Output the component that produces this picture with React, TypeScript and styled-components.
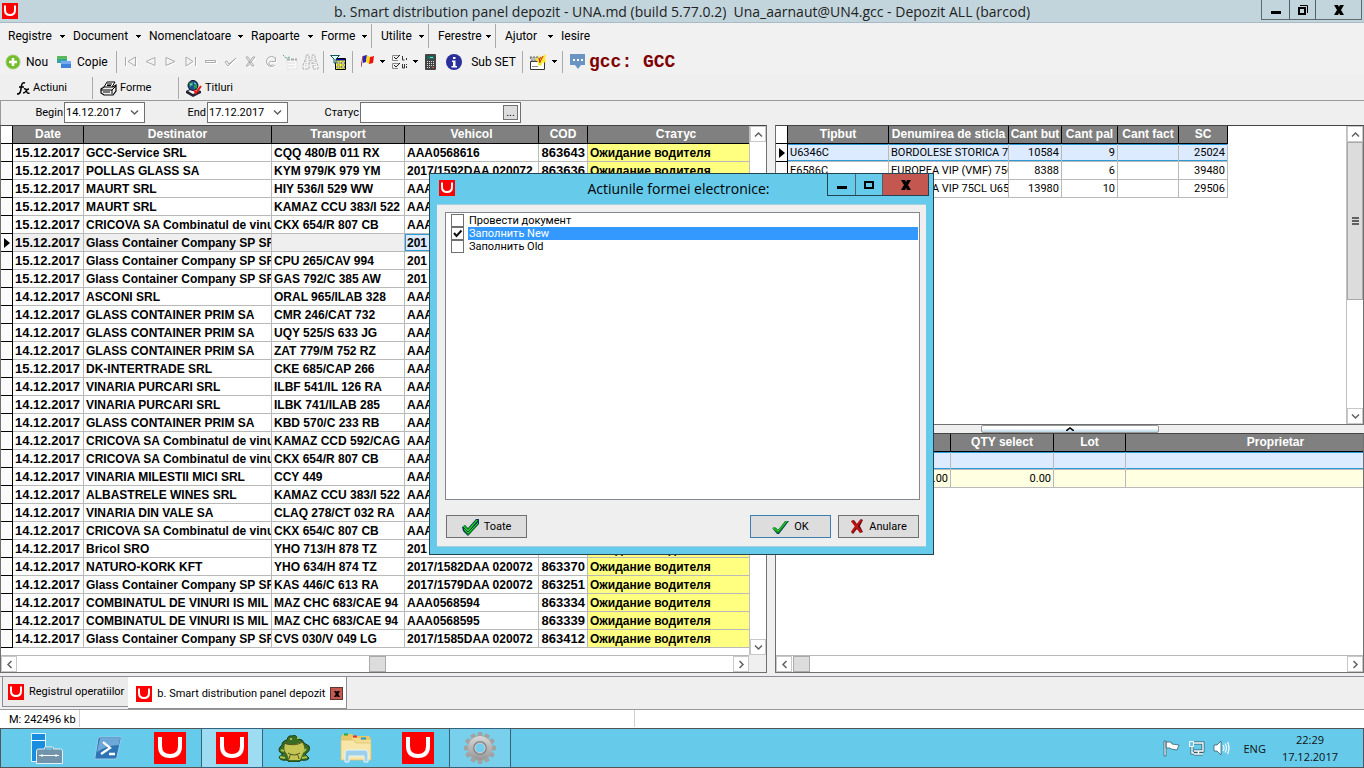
import React from "react";
import styled, { createGlobalStyle, css } from "styled-components";

const ui = `Roboto, "Noto Sans", sans-serif`;
const segoe = `"Open Sans", "Noto Sans", sans-serif`;
const sans = `"Liberation Sans", Arial, sans-serif`;

const Global = createGlobalStyle`
  * { box-sizing: border-box; }
  body { margin: 0; background: #efefef; font: 11px/14px ${ui}; color: #000; }
  button, input { font: inherit; color: inherit; margin: 0; padding: 0; border: 0; background: none; border-radius: 0; }
  svg { display: block; flex: none; }
`;

const Desktop = styled.div`
  position: relative;
  display: flex;
  flex-direction: column;
  min-height: 100vh;
  overflow: hidden;
`;

/* ---------- title bar ---------- */
const TitleBar = styled.header`
  display: grid;
  grid-template-columns: 100px minmax(0, 1fr) 100px;
  height: 23px;
  background: #c3d5dc;
  border-bottom: 1px solid #a9bac6;
`;
const TitleIcon = styled.div`
  padding: 3px 0 0 2px;
`;
const TitleText = styled.h1`
  margin: 0;
  font: 14px/24px ${segoe};
  color: #222;
  text-align: center;
  white-space: pre;
`;
const WindowButtons = styled.div<{ $dialog?: boolean }>`
  display: flex;
  justify-self: end;
  align-self: start;
  height: ${(p) => (p.$dialog ? 22 : 20)}px;
  margin-right: ${(p) => (p.$dialog ? 4 : 2)}px;
  border: 1px solid ${(p) => (p.$dialog ? "#24424f" : "#5d6a70")};
  border-top: 0;
`;
const WindowButton = styled.button<{ $w: number; $red?: boolean }>`
  width: ${(p) => p.$w}px;
  display: flex;
  align-items: center;
  justify-content: center;
  background: ${(p) => (p.$red ? "#c4574f" : "transparent")};
  & + & { border-left: 1px solid #4d646f; }
`;

/* ---------- bars ---------- */
const MenuBar = styled.nav`
  display: flex;
  align-items: center;
  height: 26px;
  padding: 0 8px;
  background: #f1f1f1;
  font-size: 12px;
`;
const MenuItem = styled.button<{ $w: number; $last?: boolean }>`
  display: flex;
  align-items: center;
  justify-content: space-between;
  width: ${(p) => p.$w}px;
  height: 24px;
  padding-right: ${(p) => (p.$last ? 4 : 8)}px;
`;
const MenuGroup = styled.div`
  display: flex;
  & + & { padding-left: 9px; border-left: 1px solid #aaa; }
`;
const ToolBar = styled.div`
  display: flex;
  align-items: center;
  height: 25px;
  padding-left: 5px;
  background: #f1f1f1;
  font-size: 12px;
`;
const Tool = styled.button<{ $w: number; $start?: boolean }>`
  display: flex;
  flex: none;
  align-items: center;
  justify-content: ${(p) => (p.$start ? "flex-start" : "center")};
  gap: 5px;
  width: ${(p) => p.$w}px;
  height: 22px;
  white-space: nowrap;
`;
const Separator = styled.span`
  width: 1px;
  height: 22px;
  margin: 0 3px;
  background: #aaa;
`;
const Company = styled.strong`
  font: bold 18px/22px "Liberation Mono", monospace;
  color: #800000;
`;
const ActionBar = styled.div`
  display: flex;
  align-items: center;
  height: 26px;
  padding: 2px 0 0 17px;
`;
const ActionGroup = styled.div<{ $w: number }>`
  display: flex;
  width: ${(p) => p.$w}px;
  & + & { padding-left: 7px; border-left: 1px solid #aaa; }
  & > button { gap: 3px; }
`;
const FilterBar = styled.form`
  display: flex;
  align-items: center;
  height: 25px;
  padding-bottom: 1px;
  border-top: 1px solid #999;
  border-left: 1px solid #999;
`;
const FilterLabel = styled.label<{ $w: number }>`
  width: ${(p) => p.$w}px;
  padding-right: 1px;
  text-align: right;
`;
const Field = styled.div<{ $w: number }>`
  display: flex;
  align-items: center;
  width: ${(p) => p.$w}px;
  height: 21px;
  padding: 0 2px 0 1px;
  border: 1px solid #707070;
  background: #fff;
`;
const FieldInput = styled.input`
  flex: 1;
  min-width: 0;
  height: 17px;
  outline: 0;
`;
const FieldButton = styled.button<{ $boxed?: boolean }>`
  display: flex;
  align-items: center;
  justify-content: center;
  width: 15px;
  height: 15px;
  ${(p) => p.$boxed && css`
    border: 1px solid #707070;
    background: #ddd;
  `}
`;

/* ---------- grids ---------- */
const Workspace = styled.main`
  flex: 1;
  display: grid;
  grid-template-columns: minmax(0, 767fr) 8px minmax(0, 589fr);
  min-height: 0;
`;
const RightColumn = styled.div`
  display: grid;
  grid-template-rows: 300px 8px minmax(0, 1fr);
  min-width: 0;
`;
const Pane = styled.section`
  display: grid;
  grid-template-columns: minmax(0, 1fr) auto;
  grid-template-rows: minmax(0, 1fr) auto;
  min-width: 0;
  border: 1px solid #707070;
  border-top-color: #444;
  background: #fff;
`;
const TableArea = styled.div`
  overflow: hidden;
`;
const Table = styled.table<{ $w: number }>`
  width: ${(p) => p.$w}px;
  table-layout: fixed;
  border-collapse: separate;
  border-spacing: 0;
`;
const Head = styled.th<{ $mark?: boolean }>`
  height: 18px;
  padding: 0;
  overflow: hidden;
  border-right: 1px solid #000;
  border-bottom: 1px solid #000;
  background: ${(p) => (p.$mark ? "#fff" : "#808080")};
  color: #fff;
  font: bold 12px/17px ${sans};
  white-space: nowrap;
`;
type Tone = "plain" | "current" | "status" | "focus" | "lemon";
const tones: Record<Tone, ReturnType<typeof css>> = {
  plain: css`background: #fff;`,
  current: css`background: #efefef;`,
  status: css`background: #ffff80;`,
  lemon: css`background: #ffffe1;`,
  focus: css`
    background: #dcebff;
    box-shadow: inset 0 1px #2a9bd8, inset 0 -1px #2a9bd8;
  `,
};
const Cell = styled.td<{ $tone?: Tone; $bold?: boolean; $number?: boolean; $right?: boolean; $edge?: boolean }>`
  height: 18px;
  padding: 1px 2px 0;
  overflow: hidden;
  white-space: nowrap;
  border-right: 1px solid #b9b9b9;
  border-bottom: 1px solid #b9b9b9;
  text-align: ${(p) => (p.$right ? "right" : "left")};
  font: ${(p) => (p.$bold ? `bold ${p.$number ? 13 : 12}px/16px ${sans}` : `11px/16px ${ui}`)};
  ${(p) => tones[p.$tone ?? "plain"]}
  ${(p) => p.$edge && css`box-shadow: inset 0 0 0 1px #2a9bd8;`}
`;
const MarkCell = styled.td`
  height: 18px;
  padding: 0 0 0 3px;
  border-right: 1px solid #000;
  border-bottom: 1px solid #000;
  background: #fbfbfb;
`;

/* ---------- scroll bars ---------- */
const VScroll = styled.div`
  display: flex;
  flex-direction: column;
  width: 17px;
  border-left: 1px solid #c0c0c0;
  background: #fff;
`;
const HScroll = styled.div`
  display: flex;
  height: 17px;
  border-top: 1px solid #b8b8b8;
  background: #fff;
`;
const ScrollButton = styled.button`
  display: flex;
  flex: none;
  align-items: center;
  justify-content: center;
  width: 16px;
  height: 16px;
  border: 1px solid #c8c8c8;
`;
const Track = styled.div<{ $grow: number }>`
  flex: ${(p) => p.$grow} 1 0;
`;
const Thumb = styled.div<{ $w?: number; $h?: number }>`
  display: flex;
  flex: none;
  align-items: center;
  justify-content: center;
  width: ${(p) => (p.$w ? p.$w + "px" : "auto")};
  height: ${(p) => (p.$h ? p.$h + "px" : "auto")};
  border: 1px solid #aaa;
  background: #dcdcdc;
`;
const Corner = styled.div`
  background: #efefef;
`;
const Splitter = styled.div`
  display: flex;
  justify-content: center;
  align-items: center;
`;
const SplitHandle = styled.button`
  display: flex;
  align-items: center;
  justify-content: center;
  width: 178px;
  height: 8px;
  border: 1px solid #999;
  border-radius: 2px;
  background: linear-gradient(#fff 40%, #b7d4e3);
`;

/* ---------- window tabs and status ---------- */
const TabStrip = styled.div`
  display: flex;
  align-items: flex-start;
  height: 34px;
  margin-top: 3px;
  padding-left: 2px;
  border-top: 1px solid #8c8c96;
  border-bottom: 1px solid #999;
`;
const WindowTab = styled.button<{ $active?: boolean }>`
  display: flex;
  align-items: center;
  gap: 5px;
  height: ${(p) => (p.$active ? 32 : 30)}px;
  padding: ${(p) => (p.$active ? "2px 3px 0 8px" : "1px 4px 0 5px")};
  border: 1px solid #8c8c96;
  border-top: 0;
  ${(p) => p.$active ? css`border-left: 0; background: #fff; margin-left: -1px;` : css`background: #ebebeb;`}
`;
const CloseMark = styled.span`
  display: flex;
  align-items: center;
  justify-content: center;
  width: 13px;
  height: 13px;
  border: 1px solid #5d3533;
  background: #c4574f;
`;
const StatusBar = styled.footer`
  display: flex;
  height: 18px;
  background: #fff;
`;
const StatusCell = styled.span<{ $w: number }>`
  width: ${(p) => p.$w}px;
  height: 17px;
  padding-left: 9px;
  border-right: 1px solid #d0d0d0;
  line-height: 20px;
  white-space: nowrap;
`;

/* ---------- taskbar ---------- */
const TaskBar = styled.div`
  display: flex;
  justify-content: space-between;
  height: 40px;
  border: 1px solid #555;
  background: #66caea;
  font: 11px/17px ${segoe};
  color: #111;
`;
const Apps = styled.div`
  display: flex;
  padding-left: 15px;
`;
const AppButton = styled.button<{ $tone?: string }>`
  display: flex;
  align-items: center;
  justify-content: center;
  width: 60px;
  height: 38px;
  margin-right: 2px;
  ${(p) => p.$tone && css`
    background: ${p.$tone};
    box-shadow: 0 0 0 1px #35617a;
  `}
`;
const Tray = styled.div`
  display: flex;
  align-items: center;
  gap: 8px;
  padding-right: 25px;
`;
const Language = styled.span`
  margin: 0 8px 0 5px;
`;
const Clock = styled.time`
  text-align: center;
  white-space: pre-line;
`;

/* ---------- dialog ---------- */
const Dialog = styled.div`
  position: absolute;
  top: 173px;
  left: calc(50% - 253px);
  display: flex;
  flex-direction: column;
  width: 505px;
  padding: 0 7px 7px;
  border: 1px solid #24424f;
  background: #66caea;
`;
const DialogTitle = styled.div`
  display: grid;
  grid-template-columns: 94px minmax(0, 1fr) 107px;
  height: 30px;
  margin-right: -7px;
`;
const DialogIcon = styled.div`
  padding: 6px 0 0 2px;
`;
const DialogHeading = styled.h2`
  margin: 0;
  font: 14px/30px ${segoe};
  text-align: center;
`;
const DialogBody = styled.div`
  padding: 7px 6px 8px 8px;
  border: 1px solid #a3cfdf;
  border-width: 1px 0;
  background: #efefef;
`;
const CheckList = styled.ul`
  height: 288px;
  margin: 0;
  padding: 1px;
  border: 1px solid #82878f;
  background: #fff;
  list-style: none;
`;
const CheckItem = styled.li`
  display: flex;
  height: 13px;
  padding-left: 4px;
`;
const CheckBox = styled.input`
  appearance: none;
  flex: none;
  width: 13px;
  height: 13px;
  border: 1px solid #707070;
  background: #fff;
  &:checked {
    background: #fff url("data:image/svg+xml,%3Csvg xmlns='http://www.w3.org/2000/svg' viewBox='0 0 11 11'%3E%3Cpath d='M2 5l2.500 3L9.500 2.500' fill='none' stroke='%23111' stroke-width='2'/%3E%3C/svg%3E");
  }
`;
const CheckLabel = styled.label<{ $selected?: boolean }>`
  flex: 1;
  margin-left: 4px;
  padding-left: 1px;
  line-height: 14px;
  ${(p) => p.$selected && css`background: #3399ff; color: #fff;`}
`;
const DialogActions = styled.div`
  display: flex;
  gap: 7px;
  margin: 15px 1px 0;
`;
const ActionButton = styled.button<{ $primary?: boolean; $first?: boolean }>`
  display: flex;
  align-items: center;
  justify-content: center;
  gap: 5px;
  width: 81px;
  height: 23px;
  border: 1px solid ${(p) => (p.$primary ? "#3c7fb1" : "#707070")};
  background: #ddd;
  ${(p) => p.$first && css`margin-right: auto;`}
`;

/* ---------- icons ---------- */
const Logo = ({ size = 16 }: { size?: number }) => (
  <svg width={size} height={size} viewBox="0 0 32 32">
    <path fill="#f00" d="M0 0h32v32H0z" />
    <path d="M6 5v9q0 10 10 10t10-10V5" fill="none" stroke="#fff" strokeWidth="4" />
  </svg>
);
const Drop = () => <svg width="5" height="3" viewBox="0 0 5 3" shapeRendering="crispEdges"><path d="M0 0h5v1H4v1H3v1H2V2H1V1H0z" /></svg>;
const Chevron = ({ turn = 0 }: { turn?: number }) => (
  <svg width="9" height="9" viewBox="0 0 9 9"><path transform={`rotate(${turn} 4.500 4.500)`} d="M1 2.500l3.500 3.500L8 2.500" fill="none" stroke="#606060" strokeWidth="1.500" /></svg>
);
const CloseX = ({ size = 10 }: { size?: number }) => (
  <svg width={size} height={size} viewBox="0 0 10 10"><path d="M0 0h4l1 2 1-2h4L7 5l3 5H6L5 8l-1 2H0l3-5z" /></svg>
);
const Minimise = () => <svg width="10" height="8" viewBox="0 0 10 8"><path d="M0 5h10v3H0z" /></svg>;
const Restore = () => (
  <svg width="10" height="10" viewBox="0 0 10 10"><path d="M1 3h6v6H1z" fill="none" stroke="#000" strokeWidth="2" /><path d="M2 .5h7.500V8" fill="none" stroke="#000" /></svg>
);
const Maximise = () => <svg width="10" height="8" viewBox="0 0 10 8"><path d="M1 1h8v6H1z" fill="none" stroke="#000" strokeWidth="2" /></svg>;
const Pointer = () => <svg width="6" height="10" viewBox="0 0 6 10"><path d="M0 0l6 5-6 5z" /></svg>;

const Plus = () => (
  <svg width="16" height="16" viewBox="0 0 16 16"><circle cx="8" cy="8" r="7" fill="#72bd2c" stroke="#9ccb6c" /><path d="M8 4v8M4 8h8" stroke="#fff" strokeWidth="2.600" /></svg>
);
const Copy = () => (
  <svg width="16" height="14" viewBox="0 0 16 14"><path fill="#35a49c" d="M1 1h10v7H1z" /><path fill="#5bb85b" d="M1 1h10v3H1z" /><path fill="#3f82dc" d="M5 6h10v7H5z" /><path fill="#76aaf0" d="M5 6h10v3H5z" /></svg>
);
const navPaths = [
  "M2.500 3v9M12.500 3L5 7.500l7.500 4.500z",
  "M12 3.500L3 7.500l9 4z",
  "M3 3.500l9 4-9 4z",
  "M12.500 3v9M3 3l7 4.500L3 12z",
  "M2.500 6.500h10v2h-10z",
  "M2 8l3 4 8-8-7 6-2-3z",
  "M3 3h2l6 9h-2zM12 3h-2L3 12h2z",
  "M12 4a5 5 0 1 0 0 7M12.500 3.500V7.500H8.500a2 2 0 1 0 1 3",
];
const Nav = ({ d }: { d: string }) => (
  <svg width="15" height="15" viewBox="0 0 15 15"><path d={d} transform="translate(1 1)" fill="none" stroke="#fff" /><path d={d} fill="none" stroke="#aaa" /></svg>
);
const FormIcon = () => (
  <svg width="16" height="16" viewBox="0 0 16 16"><path d="M5 6h10v9H5z" fill="#fafafa" stroke="#e4e4e4" /><path d="M5 5.500h10" stroke="#aaa" strokeWidth="2" strokeDasharray="3 1" /><path d="M1 1l3 3 4-1" fill="none" stroke="#4da1a1" strokeDasharray="2 1" /><path d="M6 9h7M6 12h7" stroke="#ddd" /></svg>
);
const Binoculars = () => (
  <svg width="17" height="16" viewBox="0 0 17 16"><path d="M4 1h3v4l1 2h1l1-2V1h3v3l3 8v3h-5V9H7v6H1v-4l3-7z" fill="#f4f4f4" stroke="#b0b0b0" strokeDasharray="3 1" /><path d="M4 5v8M13 5v8M7 6v3M11 6v3" stroke="#b0b0b0" strokeDasharray="1 1" /></svg>
);
const FilterForm = () => (
  <svg width="16" height="16" viewBox="0 0 16 16"><path d="M5.500 4.500h10v11h-10z" fill="#ff4" stroke="#000" /><path d="M6 5h9v1.500H6z" fill="#00a" /><path d="M7 8h3v2H7zM11.500 8h3v2h-3zM7 12h3v2H7zM11.500 12h3v2h-3z" fill="#fff" stroke="#553" strokeWidth=".7" /><path d="M.5 1.500h9L6 5v4H4V5z" fill="#dff" stroke="#155" /></svg>
);
const Flag = () => (
  <svg width="14" height="13" viewBox="0 0 14 13"><path d="M2 1l4-1-1 7-3 1z" fill="#22c" /><path d="M6 0l3 2-1 7-3-2z" fill="#fd0" /><path d="M9 2l4-1-1 7-4 1z" fill="#e11" /><path d="M2 1L0 12" stroke="#a33" /></svg>
);
const Checks = () => (
  <svg width="16" height="16" viewBox="0 0 16 16"><path d="M7 1.500H.5v5H6M7 9.500H.5v5H6" fill="none" stroke="#888" /><path d="M2 3l2 2 4-4M2 11l2 2 4-4" fill="none" stroke="#222" /><path d="M10.500 2v4h2M14.500 4v2M10.500 10v4h2v-4M14.500 10v1m0 1v2" fill="none" stroke="#333" /></svg>
);
const Calculator = () => (
  <svg width="11" height="16" viewBox="0 0 11 16"><rect width="11" height="16" rx="1" fill="#444" /><path d="M2 2h7v3H2z" fill="#1b6b5d" /><path d="M5 3.500h3" stroke="#5fe0c0" /><path d="M2 7.500h7M2 9.500h7M2 11.500h7M2 13.500h4" stroke="#ddd" strokeDasharray="1 1" /><path d="M7 13.500h2" stroke="#e44" /></svg>
);
const Info = () => (
  <svg width="16" height="16" viewBox="0 0 16 16"><circle cx="8" cy="8" r="8" fill="#2b2f9c" /><path d="M7 3h2.500v2H7zM6 6.500h3.500V12H11v1.500H5.500V12H7V8H6z" fill="#fff" /></svg>
);
const Picture = () => (
  <svg width="18" height="16" viewBox="0 0 18 16"><path d="M1.500 7.500h14v8h-14z" fill="#fff" stroke="#333" /><path d="M3 12.500h6" stroke="#888" /><path d="M1 3h8l3 4H3z" fill="#bbb" stroke="#666" strokeDasharray="2 1" /><path d="M9 1l3 2 5-3-1 5 1 3-4 1-1 3-3-1V8L6 5l4-1z" fill="#ffe92b" /><path d="M10 4l1 5M12 3l-2 3M14 2l-3 6" stroke="#c22" /></svg>
);
const Bubble = () => (
  <svg width="17" height="15" viewBox="0 0 17 15"><path d="M1 0h15v11h-4l-3 4-3-4H1z" fill="#6a94c4" /><path d="M4 5h2v2H4zM8 5h2v2H8zM12 5h2v2h-2z" fill="#fff" /></svg>
);
const Fx = () => (
  <svg width="13" height="13" viewBox="0 0 13 13"><path d="M8 1Q5 0 4.500 4L3.500 9.500Q3 12 0 12M2 5h5M7 7q2-1 2.500 2t3 2M12 7q-2 0-3 2t-3 2" fill="none" stroke="#000" strokeWidth="1.500" /></svg>
);
const Printer = () => (
  <svg width="17" height="15" viewBox="0 0 17 15"><path d="M4 6l3-5h8l-3 5" fill="#fff" stroke="#000" /><path d="M1 8l3-2h9l3-2v6l-3 4H4l-3-2z" fill="#eee" stroke="#000" strokeWidth="1.200" /><path d="M1 9h11v4M12 9l4-4M3 11h7M7 3h5M7 4.500h4" fill="none" stroke="#000" /></svg>
);
const Globe = () => (
  <svg width="16" height="17" viewBox="0 0 16 17"><path d="M0 11l6-3 9 3v2l-8 4-7-4z" fill="#223" /><path d="M2 11l5-2 6 2-6 3z" fill="#fff" /><circle cx="7" cy="5.500" r="5" fill="#15519b" stroke="#111" /><path d="M3 3l4-1v3L4 7zM8 5l3-1v4L8 9z" fill="#2c9a4a" /><path d="M4 5l2-1M8 3l2 1" stroke="#9df" /><path d="M8 10l2 3 5-7" fill="none" stroke="#e11" strokeWidth="2" /></svg>
);
const Tick = ({ twice = false }: { twice?: boolean }) => (
  <svg width="17" height="18" viewBox="0 0 17 18">
    {twice ? (
      <>
        <path d="M0 9l3-2 3 3 8-9h3v5L6 18l-5-5z" fill="#06395a" />
        <path d="M1 8l2-1 3 4 8-9h2L7 13H5z" fill="#14a01a" />
        <path d="M2 12l1-1 3 4L16 4v2L7 17H6z" fill="#0d8f15" />
        <path d="M1 8l5 5L15 2M2 11l4 4L16 5" fill="none" stroke="#35dc3c" strokeWidth=".8" />
      </>
    ) : (
      <>
        <path d="M1 11l3-1 2 2 8-9h3L7 16H5z" fill="#053a6a" />
        <path d="M0 10l3-1 3 3 7-9h3L7 15H5z" fill="#128c18" />
        <path d="M1 10l5 3 9-10" fill="none" stroke="#2fd13b" />
      </>
    )}
  </svg>
);
const Cross = () => (
  <svg width="14" height="15" viewBox="0 0 14 15"><path d="M1 2l3-1 3 4 4-5 2 1-3 6 3 6-3 1-3-4-4 5-2-2 4-6z" fill="#701010" /><path d="M2 2l9 11M11 1L2 13" stroke="#c41212" strokeWidth="2" /></svg>
);

const ServerIcon = () => (
  <svg width="33" height="33" viewBox="0 0 33 33"><path d="M1.500 1.500h14v28h-14z" fill="#1a8ede" stroke="#e4f4fc" /><path d="M1 8.500h15" stroke="#fff" /><path d="M6.500 19q0-2 2-2h6v-1q0-1 1-1h7q1 0 1 1v1h7q2 0 2 2v12.500h-26z" fill="#7194aa" stroke="#e4eef4" /><path d="M16 17h6" stroke="#66caea" strokeWidth="1.500" /><path d="M9 23.500h20M12 22v3M26 22v3" stroke="#fff" /></svg>
);
const ShellIcon = () => (
  <svg width="28" height="24" viewBox="0 0 28 24"><path d="M6 1h20q2 0 1 2l-4 18q0 2-2 2H2q-2 0-1-2L4 3q0-2 2-2z" fill="#2e74b5" stroke="#9acbeb" /><path d="M6 2h20l-1 7q-12 0-22 7z" fill="#6da9d8" /><path d="M9 6l7 6-9 6M15 18h6" fill="none" stroke="#fff" strokeWidth="2.300" /></svg>
);
const FrogIcon = () => (
  <svg width="32" height="27" viewBox="0 0 32 27"><path d="M2 12q-3 5 3 7l-4 3q1 4 8 3l2 2h10l2-2q7 1 8-2l-4-4q6-3 4-8l-5-3q-1-4-6-4-2-5-6-3-4-1-5 4-5 1-5 5z" fill="#3c6b25" stroke="#1d3d16" /><path d="M7 9q9 2 17-2 4 6 1 11l-3 7H11l-2-6q-4-4-2-10z" fill="#c7c456" /><path d="M6 8q10 4 19-1M10 18q6 4 12 0M11 24q0-4 3-5M21 24q0-4-3-5" fill="none" stroke="#4a581b" /><path d="M12 4h2M19 3h2M3 15l3 1M28 14l-3 3M2 22l5 1M29 22l-5 1" stroke="#9fc64b" strokeWidth="2" /></svg>
);
const FolderIcon = () => (
  <svg width="32" height="30" viewBox="0 0 32 30"><path d="M1 4l2-3h9l2 2h15l2 3v20H1z" fill="#e8c766" /><path d="M12 5h7l2 2h10v20H12z" fill="#f3dc90" /><path d="M1 7h13l2 3h15v17H1z" fill="#f7e6a8" stroke="#dcc073" strokeWidth=".8" /><path d="M4 1.500h4" stroke="#28a745" strokeWidth="2" /><path d="M13 3.500h4" stroke="#d33" strokeWidth="2" /><path d="M21 5.500h5" stroke="#29c" strokeWidth="2" /><path d="M5 29V20q0-3 3-3h17q3 0 3 3v9h-4v-6H9v6z" fill="#9fd0ea" stroke="#e5f6ff" /></svg>
);
const GearIcon = () => (
  <svg width="32" height="32" viewBox="0 0 32 32">
    <defs><linearGradient id="steel" x2="0" y2="1"><stop stopColor="#d8d8d8" /><stop offset="1" stopColor="#969696" /></linearGradient></defs>
    <g fill="#a2a2a2">
      {[0, 30, 60, 90, 120, 150].map((a) => <path key={a} transform={`rotate(${a} 16 16)`} d="M14 0h4l1 5v22l-1 5h-4l-1-5V5z" />)}
    </g>
    <circle cx="16" cy="16" r="12" fill="url(#steel)" /><circle cx="16" cy="16" r="7" fill="#85898c" /><circle cx="16" cy="16" r="5" fill="#74cdec" stroke="#d4d4d4" />
  </svg>
);
const TrayFlag = () => (
  <svg width="17" height="17" viewBox="0 0 17 17"><path d="M1 1h2v15H1zM3 2h5l1 2 7 1-2 5-6-1-1-1H3z" fill="#fff" stroke="#35606f" strokeWidth=".8" /></svg>
);
const Network = () => (
  <svg width="17" height="16" viewBox="0 0 17 16"><path d="M6 3h9v8H6M10.500 11v3M6 14h9M4 6v7h2" fill="none" stroke="#35606f" strokeWidth="3" /><path d="M6 3h9v8H6M10.500 11v3M6 14h9M4 6v7h2" fill="none" stroke="#fff" strokeWidth="1.400" /><path d="M1.500 1.500h4v5h-4z" fill="#66caea" stroke="#fff" /></svg>
);
const Speaker = () => (
  <svg width="17" height="16" viewBox="0 0 17 16"><path d="M1 5h3l4-4v14l-4-4H1z" fill="#fff" stroke="#35606f" strokeWidth=".8" /><path d="M10 5q2 3 0 6M12 3.500q3 4.500 0 9M14.500 2q3 6 0 12" fill="none" stroke="#fff" strokeWidth="1.200" /></svg>
);

/* ---------- data ---------- */
const WAIT = "Ожидание водителя";
const GCC = "Glass Container Company SP SR";
const PRIM = "GLASS CONTAINER PRIM SA";
const CRI = "CRICOVA SA Combinatul de vinu";
const COMB = "COMBINATUL DE VINURI IS MIL";
const deliveries: [string, string, string, string, string][] = [
  ["15", "GCC-Service SRL", "CQQ 480/B 011 RX", "AAA0568616", "863643"],
  ["15", "POLLAS GLASS SA", "KYM 979/K 979 YM", "2017/1592DAA 020072", "863636"],
  ["15", "MAURT SRL", "HIY 536/I 529 WW", "AAA", ""],
  ["15", "MAURT SRL", "KAMAZ CCU 383/I 522", "AAA", ""],
  ["15", CRI, "CKX 654/R 807 CB", "AAA", ""],
  ["15", GCC, "", "201", ""],
  ["15", GCC, "CPU 265/CAV 994", "201", ""],
  ["15", GCC, "GAS 792/C 385 AW", "201", ""],
  ["14", "ASCONI SRL", "ORAL 965/ILAB 328", "AAA", ""],
  ["14", PRIM, "CMR 246/CAT 732", "AAA", ""],
  ["14", PRIM, "UQY 525/S 633 JG", "AAA", ""],
  ["14", PRIM, "ZAT 779/M 752 RZ", "AAA", ""],
  ["15", "DK-INTERTRADE SRL", "CKE 685/CAP 266", "AAA", ""],
  ["14", "VINARIA PURCARI SRL", "ILBF 541/IL 126 RA", "AAA", ""],
  ["14", "VINARIA PURCARI SRL", "ILBK 741/ILAB 285", "AAA", ""],
  ["14", PRIM, "KBD 570/C 233 RB", "AAA", ""],
  ["14", CRI, "KAMAZ CCD 592/CAG", "AAA", ""],
  ["14", CRI, "CKX 654/R 807 CB", "AAA", ""],
  ["14", "VINARIA MILESTII MICI SRL", "CCY 449", "AAA", ""],
  ["14", "ALBASTRELE WINES SRL", "KAMAZ CCU 383/I 522", "AAA", ""],
  ["14", "VINARIA DIN VALE SA", "CLAQ 278/CT 032 RA", "AAA", ""],
  ["14", CRI, "CKX 654/C 807 CB", "AAA", ""],
  ["14", "Bricol SRO", "YHO 713/H 878 TZ", "201", ""],
  ["14", "NATURO-KORK KFT", "YHO 634/H 874 TZ", "2017/1582DAA 020072", "863370"],
  ["14", GCC, "KAS 446/C 613 RA", "2017/1579DAA 020072", "863251"],
  ["14", COMB, "MAZ CHC 683/CAE 94", "AAA0568594", "863334"],
  ["14", COMB, "MAZ CHC 683/CAE 94", "AAA0568595", "863339"],
  ["14", GCC, "CVS 030/V 049 LG", "2017/1585DAA 020072", "863412"],
];
const CURRENT = 5;
const bottles = [
  ["U6346C", "BORDOLESE STORICA 75", "10584", "9", "", "25024"],
  ["E6586C", "EUROPEA VIP (VMF) 75C", "8388", "6", "", "39480"],
  ["U6586C", "EUROPEA VIP 75CL U658", "13980", "10", "", "29506"],
];
const options = [
  { id: "post", text: "Провести документ", on: false },
  { id: "fill-new", text: "Заполнить New", on: true },
  { id: "fill-old", text: "Заполнить Old", on: false },
];

const Columns = ({ widths }: { widths: number[] }) => (
  <colgroup>{widths.map((w, i) => <col key={i} width={w} />)}</colgroup>
);
const HeaderRow = ({ names }: { names: string[] }) => (
  <thead><tr><Head $mark />{names.map((n, i) => <Head key={i}>{n}</Head>)}</tr></thead>
);
const HorizontalScroll = ({ before, after }: { before: number; after: number }) => (
  <HScroll>
    <ScrollButton aria-label="Left"><Chevron turn={90} /></ScrollButton>
    <Track $grow={before} /><Thumb $w={17} /><Track $grow={after} />
    <ScrollButton aria-label="Right"><Chevron turn={-90} /></ScrollButton>
  </HScroll>
);

function Deliveries() {
  return (
    <Pane>
      <TableArea>
        <Table $w={764}>
          <Columns widths={[12, 71, 188, 133, 134, 49, 177]} />
          <HeaderRow names={["Date", "Destinator", "Transport", "Vehicol", "COD", "Статус"]} />
          <tbody>
            {deliveries.map(([day, to, truck, vehicle, code], i) => {
              const tone: Tone = i === CURRENT ? "current" : "plain";
              return (
                <tr key={i}>
                  <MarkCell>{i === CURRENT && <Pointer />}</MarkCell>
                  <Cell $bold $number $tone={tone}>{day}.12.2017</Cell>
                  <Cell $bold $tone={tone}>{to}</Cell>
                  <Cell $bold $tone={tone}>{truck}</Cell>
                  <Cell $bold $tone={i === CURRENT ? "focus" : "plain"} $edge={i === CURRENT}>{vehicle}</Cell>
                  <Cell $bold $number $right>{code}</Cell>
                  <Cell $bold $tone="status">{WAIT}</Cell>
                </tr>
              );
            })}
          </tbody>
        </Table>
      </TableArea>
      <VScroll>
        <ScrollButton aria-label="Up"><Chevron turn={180} /></ScrollButton>
        <Track $grow={1} />
        <ScrollButton aria-label="Down"><Chevron /></ScrollButton>
      </VScroll>
      <HorizontalScroll before={351} after={346} />
      <Corner />
    </Pane>
  );
}

function Bottles() {
  return (
    <Pane>
      <TableArea>
        <Table $w={452}>
          <Columns widths={[12, 101, 120, 53, 56, 61, 49]} />
          <HeaderRow names={["Tipbut", "Denumirea de sticla", "Cant but", "Cant pal", "Cant fact", "SC"]} />
          <tbody>
            {bottles.map((row, i) => (
              <tr key={i}>
                <MarkCell>{i === 0 && <Pointer />}</MarkCell>
                {row.map((v, c) => <Cell key={c} $right={c > 1} $tone={i === 0 ? "focus" : "plain"}>{v}</Cell>)}
              </tr>
            ))}
          </tbody>
        </Table>
      </TableArea>
      <VScroll>
        <ScrollButton aria-label="Up"><Chevron turn={180} /></ScrollButton>
        <Thumb $h={158}>
          <svg width="7" height="8" viewBox="0 0 7 8"><path d="M0 1h7M0 4h7M0 7h7" stroke="#606060" strokeWidth="2" /></svg>
        </Thumb>
        <Track $grow={1} />
        <ScrollButton aria-label="Down"><Chevron /></ScrollButton>
      </VScroll>
    </Pane>
  );
}

function Lots() {
  return (
    <Pane>
      <TableArea>
        <Table $w={650}>
          <Columns widths={[12, 70, 93, 103, 72, 300]} />
          <HeaderRow names={["", "", "QTY select", "Lot", "Proprietar"]} />
          <tbody>
            <tr><MarkCell><Pointer /></MarkCell>{[0, 1, 2, 3, 4].map((c) => <Cell key={c} $tone="focus" />)}</tr>
            <tr><MarkCell />{["", "0.00", "0.00", "", ""].map((v, c) => <Cell key={c} $tone="lemon" $right>{v}</Cell>)}</tr>
          </tbody>
        </Table>
      </TableArea>
      <span />
      <HorizontalScroll before={1} after={540} />
    </Pane>
  );
}

function ActionsDialog() {
  return (
    <Dialog role="dialog" aria-labelledby="actions-title">
      <DialogTitle>
        <DialogIcon><Logo /></DialogIcon>
        <DialogHeading id="actions-title">Actiunile formei electronice:</DialogHeading>
        <WindowButtons $dialog>
          <WindowButton $w={27} aria-label="Minimize"><Minimise /></WindowButton>
          <WindowButton $w={27} aria-label="Maximize"><Maximise /></WindowButton>
          <WindowButton $w={46} $red aria-label="Close"><CloseX /></WindowButton>
        </WindowButtons>
      </DialogTitle>
      <DialogBody>
        <CheckList>
          {options.map((o) => (
            <CheckItem key={o.id}>
              <CheckBox type="checkbox" id={o.id} defaultChecked={o.on} />
              <CheckLabel htmlFor={o.id} $selected={o.on}>{o.text}</CheckLabel>
            </CheckItem>
          ))}
        </CheckList>
        <DialogActions>
          <ActionButton $first><Tick twice />Toate</ActionButton>
          <ActionButton $primary><Tick />OK</ActionButton>
          <ActionButton><Cross />Anulare</ActionButton>
        </DialogActions>
      </DialogBody>
    </Dialog>
  );
}

export default function App() {
  return (
    <Desktop>
      <Global />
      <TitleBar>
        <TitleIcon><Logo /></TitleIcon>
        <TitleText>{"b. Smart distribution panel depozit - UNA.md (build 5.77.0.2)  Una_aarnaut@UN4.gcc - Depozit ALL (barcod)"}</TitleText>
        <WindowButtons>
          <WindowButton $w={27} aria-label="Minimize"><Minimise /></WindowButton>
          <WindowButton $w={26} aria-label="Restore"><Restore /></WindowButton>
          <WindowButton $w={46} aria-label="Close"><CloseX /></WindowButton>
        </WindowButtons>
      </TitleBar>

      <MenuBar>
        <MenuGroup>
          <MenuItem $w={65}>Registre<Drop /></MenuItem>
          <MenuItem $w={76}>Document<Drop /></MenuItem>
          <MenuItem $w={102}>Nomenclatoare<Drop /></MenuItem>
          <MenuItem $w={70}>Rapoarte<Drop /></MenuItem>
          <MenuItem $w={50} $last>Forme<Drop /></MenuItem>
        </MenuGroup>
        <MenuGroup>
          <MenuItem $w={47} $last>Utilite<Drop /></MenuItem>
        </MenuGroup>
        <MenuGroup>
          <MenuItem $w={57} $last>Ferestre<Drop /></MenuItem>
        </MenuGroup>
        <MenuGroup>
          <MenuItem $w={56}>Ajutor<Drop /></MenuItem>
          <MenuItem $w={40}>Iesire</MenuItem>
        </MenuGroup>
      </MenuBar>

      <ToolBar>
        <Tool $w={51} $start><Plus />Nou</Tool>
        <Tool $w={57} $start><Copy />Copie</Tool>
        <Separator />
        {navPaths.map((d, i) => <Tool key={i} $w={20} aria-label={`Record action ${i + 1}`}><Nav d={d} /></Tool>)}
        <Tool $w={20} aria-label="Form"><FormIcon /></Tool>
        <Tool $w={20} aria-label="Find"><Binoculars /></Tool>
        <Separator />
        <Tool $w={22} aria-label="Filter"><FilterForm /></Tool>
        <Separator />
        <Tool $w={34} aria-label="Language"><Flag /><Drop /></Tool>
        <Tool $w={30} aria-label="Options"><Checks /><Drop /></Tool>
        <Tool $w={20} aria-label="Calculator"><Calculator /></Tool>
        <Tool $w={28} aria-label="Info"><Info /></Tool>
        <Tool $w={51}>Sub SET</Tool>
        <Separator />
        <Tool $w={33} aria-label="Image"><Picture /><Drop /></Tool>
        <Separator />
        <Tool $w={23} aria-label="Messages"><Bubble /></Tool>
        <Company>gcc: GCC</Company>
      </ToolBar>

      <ActionBar>
        <ActionGroup $w={75}><Tool $w={60} $start><Fx />Actiuni</Tool></ActionGroup>
        <ActionGroup $w={86}><Tool $w={70} $start><Printer />Forme</Tool></ActionGroup>
        <ActionGroup $w={86}><Tool $w={70} $start><Globe />Titluri</Tool></ActionGroup>
      </ActionBar>

      <FilterBar>
        <FilterLabel $w={63} htmlFor="begin">Begin</FilterLabel>
        <Field $w={81}>
          <FieldInput id="begin" defaultValue="14.12.2017" />
          <FieldButton type="button" aria-label="Pick begin date"><Chevron /></FieldButton>
        </Field>
        <FilterLabel $w={62} htmlFor="end">End</FilterLabel>
        <Field $w={81}>
          <FieldInput id="end" defaultValue="17.12.2017" />
          <FieldButton type="button" aria-label="Pick end date"><Chevron /></FieldButton>
        </Field>
        <FilterLabel $w={72} htmlFor="status">Статус</FilterLabel>
        <Field $w={161}>
          <FieldInput id="status" />
          <FieldButton type="button" $boxed aria-label="Choose status">...</FieldButton>
        </Field>
      </FilterBar>

      <Workspace>
        <Deliveries />
        <span />
        <RightColumn>
          <Bottles />
          <Splitter>
            <SplitHandle aria-label="Collapse">
              <svg width="8" height="4" viewBox="0 0 8 4"><path d="M0 4l4-3 4 3" fill="none" stroke="#000" strokeWidth="1.500" /></svg>
            </SplitHandle>
          </Splitter>
          <Lots />
        </RightColumn>
      </Workspace>

      <TabStrip>
        <WindowTab><Logo />Registrul operatiilor</WindowTab>
        <WindowTab $active><Logo />b. Smart distribution panel depozit<CloseMark><CloseX size={6} /></CloseMark></WindowTab>
      </TabStrip>
      <StatusBar><StatusCell $w={80}>M: 242496 kb</StatusCell><StatusCell $w={555} /></StatusBar>

      <TaskBar>
        <Apps>
          <AppButton aria-label="Server Manager"><ServerIcon /></AppButton>
          <AppButton aria-label="PowerShell"><ShellIcon /></AppButton>
          <AppButton aria-label="UNA"><Logo size={32} /></AppButton>
          <AppButton $tone="#9edcf2" aria-label="UNA"><Logo size={32} /></AppButton>
          <AppButton aria-label="Toad"><FrogIcon /></AppButton>
          <AppButton aria-label="Explorer"><FolderIcon /></AppButton>
          <AppButton aria-label="UNA"><Logo size={32} /></AppButton>
          <AppButton $tone="#78d0ed" aria-label="Settings"><GearIcon /></AppButton>
        </Apps>
        <Tray>
          <TrayFlag /><Network /><Speaker />
          <Language>ENG</Language>
          <Clock>{"22:29\n17.12.2017"}</Clock>
        </Tray>
      </TaskBar>

      <ActionsDialog />
    </Desktop>
  );
}
